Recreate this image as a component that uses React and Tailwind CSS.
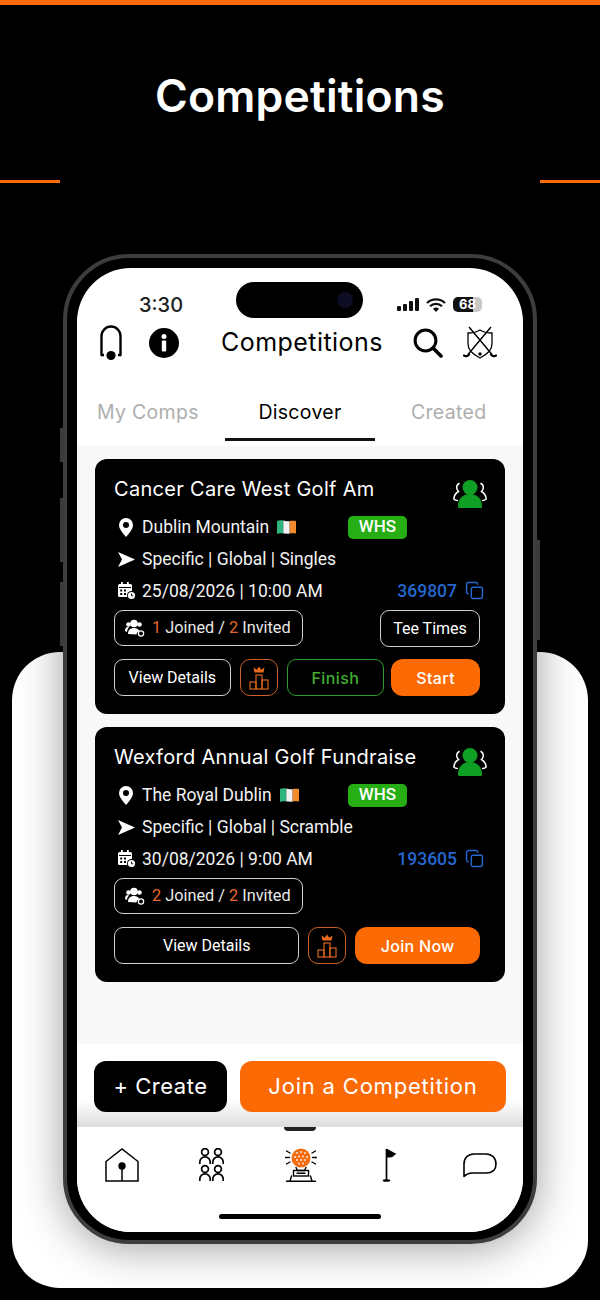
import React from "react";
import { Copy } from "lucide-react";

// icons
const GolfBag = () => (
    <svg width="24" height="36" viewBox="0 0 24 36" fill="none" stroke="#000" strokeWidth="2.4">
        <path d="M2.5 30V11a9.5 9.5 0 0 1 19 0v19" strokeLinecap="round" />
        <path d="M2 30h3M19 30h3" />
        <circle cx="12" cy="30.5" r="4.6" fill="#000" stroke="none" />
    </svg>
);

const InfoIcon = () => (
    <svg width="30" height="30" viewBox="0 0 30 30">
        <circle cx="15" cy="15" r="15" fill="#000" />
        <circle cx="15" cy="8.5" r="2.5" fill="#fff" />
        <rect x="12.8" y="12.5" width="4.4" height="11" rx="1" fill="#fff" />
    </svg>
);

const SearchIcon = () => (
    <svg width="30" height="30" viewBox="0 0 30 30" fill="none" stroke="#000" strokeLinecap="round">
        <circle cx="12.5" cy="12.5" r="10.4" strokeWidth="3" />
        <path d="M20 20l8 8" strokeWidth="3.6" />
    </svg>
);

const ShieldClubs = () => (
    <svg width="34" height="34" viewBox="0 0 34 34" fill="none" stroke="#000" strokeWidth="1.3">
        <path d="M5 7c4 0 9-1 12-3 3 2 8 3 12 3v11c0 6-6 11-12 14C11 29 5 24 5 18z" />
        <path d="M28 1L5 28.5M6 1l23 27.5" strokeWidth="1.4" />
        <path d="M1 29.5c1 1 4 1 5-1M33 29.5c-1 1-4 1-5-1" strokeWidth="2.2" strokeLinecap="round" />
        <circle cx="17" cy="28" r="1.1" fill="#000" />
    </svg>
);

const Signal = () => (
    <svg width="23" height="13" viewBox="0 0 23 13" fill="#111">
        <rect x="0" y="8" width="4" height="5" rx="1" />
        <rect x="6" y="6" width="4" height="7" rx="1" />
        <rect x="12" y="3" width="4" height="10" rx="1" />
        <rect x="18" y="0" width="4" height="13" rx="1" />
    </svg>
);

const Wifi = () => (
    <svg width="20" height="14" viewBox="0 0 20 14" fill="none" stroke="#111" strokeWidth="2.3">
        <path d="M1 5a13 13 0 0 1 18 0M4 8.3a8.6 8.6 0 0 1 12 0" />
        <path d="M10 14l-3-3.2a4.2 4.2 0 0 1 6 0z" fill="#111" stroke="none" />
    </svg>
);

const PinIcon = () => (
    <svg width="16" height="19" viewBox="0 0 16 19">
        <path fillRule="evenodd" d="M8 0a7 7 0 0 1 7 7c0 4.5-5 9.5-7 12C6 16.500 1 11.500 1 7a7 7 0 0 1 7-7zm0 4a3 3 0 1 0 0 6 3 3 0 0 0 0-6z" fill="#fff" />
    </svg>
);

const SendIcon = () => (
    <svg width="17" height="15" viewBox="0 0 17 15">
        <path d="M0 0l17 7.500L0 15l4-7.500z" fill="#fff" />
    </svg>
);

const CalendarIcon = () => (
    <svg width="18" height="18" viewBox="0 0 18 18" fill="#fff">
        <rect x="0" y="2" width="14" height="13" rx="1.500" />
        <rect x="3" y="0" width="1.800" height="4" />
        <rect x="9" y="0" width="1.800" height="4" />
        <g fill="#000">
            <rect x="1" y="5" width="12" height="1" />
            <rect x="2.200" y="7.500" width="2" height="2" />
            <rect x="6" y="7.500" width="2" height="2" />
            <rect x="2.200" y="11" width="2" height="2" />
            <rect x="6" y="11" width="2" height="2" />
        </g>
        <circle cx="13.500" cy="13.500" r="4.500" fill="#000" />
        <circle cx="13.500" cy="13.500" r="3.600" />
        <path d="M13.500 11.500v2.300h1.800" stroke="#000" strokeWidth="0.900" fill="none" />
    </svg>
);

const PeopleGear = () => (
    <svg width="20" height="18" viewBox="0 0 20 18" fill="#fff">
        <circle cx="9" cy="4.500" r="3.800" />
        <circle cx="3.500" cy="5.500" r="2.300" />
        <circle cx="14.500" cy="5.500" r="2.300" />
        <path d="M3 15c0-4 2.500-6 6-6 2.500 0 4.500 1 5.500 3-2 .5-3 2-3 3.500z" />
        <path d="M0 12c0-2.500 1-4 3-4l1 .5C2.500 10 2 11.500 2 13z" />
        <circle cx="16" cy="14.500" r="2.600" fill="none" stroke="#fff" strokeWidth="1.300" />
    </svg>
);

const IrishFlag = () => (
    <svg width="19" height="14" viewBox="0 0 19 14">
        <path d="M0 1c2-1 4-1 6.300-.5V13.500C4 13 2 13 0 14z" fill="#2fb37f" />
        <path d="M6.300.5c2 .5 4 1 6.400.5v12.500c-2.400.5-4.400 0-6.400 0z" fill="#f2f2f2" />
        <path d="M12.700 1c2.300-.5 4.300-.5 6.300 0v12.500c-2 0-4-.5-6.300 0z" fill="#f08a2c" />
    </svg>
);

const GreenPlayers = () => (
    <svg width="34" height="28" viewBox="0 0 34 28">
        <circle cx="17" cy="7.500" r="7.500" fill="#0f9f24" />
        <path d="M5 26.500c0-7.500 4.500-12.500 12-12.500s12 5 12 12.500c0 1-.5 1.500-1.500 1.500h-21c-1 0-1.500-.5-1.500-1.500z" fill="#0f9f24" />
        <path d="M6 3.500C2 6 4 10 5.500 11.500 3 13 1 15 0.800 19c1 1 2 1.500 3.500 1.500M28 3.500c4 2.500 2 6.500.5 8 2.500 1.500 4.500 3.500 4.700 7.500-1 1-2 1.500-3.500 1.500" fill="none" stroke="#fff" strokeWidth="1.500" strokeLinecap="round" />
    </svg>
);

const Podium = () => (
    <svg width="20" height="24" viewBox="0 0 20 24" fill="none" stroke="#d9651f" strokeWidth="1.200">
        <path d="M5.500 6.500L4.500 1.500 7.800 3.800 10 .5l2.200 3.300 3.300-2.300-1 5z" fill="#e9691d" stroke="none" />
        <rect x="7" y="9" width="6" height="14" />
        <rect x="1" y="16" width="6" height="7" />
        <rect x="13" y="14" width="6" height="9" />
    </svg>
);

const HomeIcon = () => (
    <svg width="34" height="34" viewBox="0 0 34 34" fill="none" stroke="#000" strokeWidth="1.500">
        <path d="M1 33V13.500L17 1l16 12.500V33z" />
        <circle cx="17" cy="18" r="3.700" fill="#000" stroke="none" />
        <path d="M17 20v13" />
    </svg>
);

const Person = ({ x, y }) => (
    <g transform={`translate(${x} ${y})`}>
        <circle cx="6" cy="4" r="3.400" />
        <path d="M.8 16v-2a5.200 5.200 0 0 1 10.400 0v2" />
    </g>
);

const GroupIcon = () => (
    <svg width="27" height="34" viewBox="0 0 27 34" fill="none" stroke="#000" strokeWidth="1.700">
        <Person x={1} y={0} />
        <Person x={14} y={0} />
        <Person x={1} y={17} />
        <Person x={14} y={17} />
    </svg>
);

const GolfTrophy = () => (
    <svg width="32" height="34" viewBox="0 0 32 34">
        <circle cx="16" cy="10" r="9.500" fill="#f26c12" />
        <g fill="#fde3cf">
            {[[12, 5], [16, 4], [20, 5], [10, 9], [14, 8.500], [18, 8.500], [22, 9], [12, 12], [16, 12], [20, 12], [14, 15.500], [18, 15.500]].map(([cx, cy]) => (
                <circle key={`${cx}-${cy}`} cx={cx} cy={cy} r="1" />
            ))}
        </g>
        <g fill="none" stroke="#000" strokeWidth="1.400" strokeLinecap="round">
            <path d="M0.500 9.500h4M27.500 9.500h4M1.500 3l3.500 2M30.500 3L27 5M1.500 16l3.500-2M30.500 16L27 14" />
            <path d="M11 19.500l1.500 3h7l1.500-3" />
            <rect x="8.500" y="22.500" width="15" height="5.500" />
            <path d="M12 25.300h8" />
            <path d="M6.500 28l-1.500 5M25.500 28l1.500 5M1.500 33.300h29" />
        </g>
    </svg>
);

const FlagIcon = () => (
    <svg width="16" height="34" viewBox="0 0 16 34">
        <path d="M4.500 1v31" stroke="#000" strokeWidth="1.700" />
        <path d="M4.500 0.500l10 5.500c-2 1-2 1-4 3-2 .5-4 .5-6 .5z" fill="#000" />
        <ellipse cx="4.500" cy="32.500" rx="3.800" ry="1.300" fill="#000" />
    </svg>
);

const ChatIcon = () => (
    <svg width="34" height="25" viewBox="0 0 34 25" fill="none" stroke="#000" strokeWidth="1.600">
        <path d="M1 23.500V11C1 5 5 1 11 1h12c6 0 10 4 10 10s-4 9-10 9H9c-3 0-6 1.500-8 3.500z" strokeLinejoin="round" />
    </svg>
);

const outlineBtn = "h-[37px] flex items-center justify-center rounded-[9px] border-[1.500px] border-[#cfcfcf] text-white text-[16px] font-['Roboto',sans-serif]";

function Card({ title, course, format, date, code, joined, finished }) {
    return (
        <div className="relative h-[255px] rounded-[12px] bg-black pl-[19px] pr-[25px] pt-[17px] text-[#f2f2f2] font-['Roboto',sans-serif]">
            <div className="h-[26px] text-[20px] leading-[26px] tracking-[0.3px] text-white font-['Inter',sans-serif]">{title}</div>
            <div className="absolute right-[18px] top-[21px]">
                <GreenPlayers />
            </div>

            <div className="mt-[9px] h-[32px] flex items-center text-[17.500px]">
                <span className="w-[28px] pl-[4px] flex">
                    <PinIcon />
                </span>
                <span className="w-[206px] flex items-center gap-[8px] whitespace-nowrap">
                    {course}
                    <IrishFlag />
                </span>
                <span className="w-[59px] h-[23px] rounded-[5px] bg-[#27ae14] flex items-center justify-center text-[17px] font-medium text-white">WHS</span>
            </div>
            <div className="h-[32px] flex items-center text-[17.500px]">
                <span className="w-[28px] pl-[4px] flex">
                    <SendIcon />
                </span>
                {format}
            </div>
            <div className="h-[32px] flex items-center text-[17.500px]">
                <span className="w-[28px] pl-[4px] flex">
                    <CalendarIcon />
                </span>
                {date}
                <span className="ml-auto font-medium text-[#2467cf]">{code}</span>
                <Copy className="ml-[8px] mr-[-4px] mt-[-1px] text-[#2467cf]" size={19} strokeWidth={1.800} />
            </div>

            <div className="mt-[3px] flex justify-between items-start">
                <div className="h-[36px] w-[189px] pl-[10px] flex items-center rounded-[9px] border-[1.500px] border-[#cfcfcf] text-[16.300px] text-[#e8e8e8]">
                    <PeopleGear />
                    <span className="ml-[7px]">
                        <span className="text-[#e9692c]">{joined}</span> Joined / <span className="text-[#e9692c]">2</span> Invited
                    </span>
                </div>
                {finished && <div className={`${outlineBtn} w-[100px]`}>Tee Times</div>}
            </div>

            {finished ? (
                <div className="mt-[12px] flex">
                    <div className={`${outlineBtn} w-[117px]`}>View Details</div>
                    <div className="ml-[9px] w-[38px] h-[37px] flex items-center justify-center rounded-[10px] border-[1.500px] border-[#c9632a]">
                        <Podium />
                    </div>
                    <div className="ml-[9px] w-[98px] h-[37px] flex items-center justify-center rounded-[9px] border-[1.500px] border-[#2f9a2f] text-[#3fae30] text-[16px] font-medium tracking-[0.4px] font-['Inter',sans-serif]">
                        Finish
                    </div>
                    <div className="ml-[7px] w-[89px] h-[37px] flex items-center justify-center rounded-[12px] bg-[#fb6a05] text-[16px] text-white font-medium tracking-[0.4px] font-['Inter',sans-serif]">
                        Start
                    </div>
                </div>
            ) : (
                <div className="mt-[13px] flex">
                    <div className={`${outlineBtn} w-[186px]`}>View Details</div>
                    <div className="ml-[9px] w-[38px] h-[37px] flex items-center justify-center rounded-[10px] border-[1.500px] border-[#c9632a]">
                        <Podium />
                    </div>
                    <div className="ml-[9px] w-[125px] h-[37px] flex items-center justify-center rounded-[12px] bg-[#fb6a05] text-[16px] text-white font-medium tracking-[0.3px] font-['Inter',sans-serif]">
                        Join Now
                    </div>
                </div>
            )}
        </div>
    );
}

function PhoneScreen() {
    return (
        <div className="h-[964px] rounded-[54px] bg-white overflow-hidden flex flex-col font-['Inter',sans-serif]">
            {/* status bar */}
            <div className="h-[50px] pt-[14px] flex items-start relative shrink-0">
                <div className="ml-[62px] mt-[11px] text-[20px] leading-[24px] font-medium text-[#222]">3:30</div>
                <div className="absolute left-[159px] top-[14px] w-[127px] h-[36px] rounded-full bg-black flex items-center justify-end pr-[10px]">
                    <div className="w-[16px] h-[16px] rounded-full bg-[#0c0c24]" />
                </div>
                <div className="absolute left-[320px] top-[29px] flex items-center">
                    <Signal />
                    <span className="ml-[6px]">
                        <Wifi />
                    </span>
                    <div className="ml-[7px] w-[29px] h-[15px] rounded-[5px] bg-[linear-gradient(90deg,#111_0,#111_68%,#c8c8c8_68%)] flex items-center justify-center text-[13px] leading-none font-bold text-white">68</div>
                </div>
            </div>

            {/* header */}
            <div className="relative mt-[7px] h-[36px] shrink-0 flex items-center">
                <div className="ml-[22px]">
                    <GolfBag />
                </div>
                <div className="ml-[26px]">
                    <InfoIcon />
                </div>
                <div className="ml-[42px] w-[162px] whitespace-nowrap text-[25px] tracking-[0.45px] text-black">Competitions</div>
                <div className="ml-[30px]">
                    <SearchIcon />
                </div>
                <div className="ml-[20px]">
                    <ShieldClubs />
                </div>
            </div>

            {/* tabs */}
            <div className="mt-[37px] h-[43px] shrink-0 flex text-[19.500px] tracking-[0.3px]">
                <div className="w-[148px] pl-[20px] text-[#aeaeae]">My Comps</div>
                <div className="w-[150px] h-[43px] text-center text-black border-b-[3px] border-[#111]">Discover</div>
                <div className="flex-1 pl-[36px] text-[#aeaeae]">Created</div>
            </div>

            {/* list */}
            <div className="mt-[5px] h-[598px] shrink-0 bg-[#f8f8f8] px-[18px] pt-[13px] flex flex-col gap-[13px]">
                <Card title="Cancer Care West Golf Am" course="Dublin Mountain" format="Specific | Global | Singles" date="25/08/2026 | 10:00 AM" code="369807" joined="1" finished />
                <Card title="Wexford Annual Golf Fundraise" course="The Royal Dublin" format="Specific | Global | Scramble" date="30/08/2026 | 9:00 AM" code="193605" joined="2" />
            </div>

            {/* actions */}
            <div className="h-[83px] shrink-0 bg-[linear-gradient(180deg,#fff_0,#fff_68%,#dcdcdc_100%)] pl-[17px] pr-[17px] pt-[17px] flex gap-[13px]">
                <div className="w-[133px] h-[51px] rounded-[12px] bg-black text-white flex items-center justify-center text-[22px] tracking-[0.5px]">+ Create</div>
                <div className="flex-1 h-[51px] rounded-[12px] bg-[#fb6a05] text-white flex items-center justify-center text-[22px] tracking-[0.8px]">Join a Competition</div>
            </div>

            {/* tab bar */}
            <div className="relative flex-1 bg-white">
                <div className="absolute left-[207px] top-0 w-[32px] h-[4px] rounded-b-[4px] bg-[#222]" />
                <div className="flex items-start pt-[21px]">
                    <div className="ml-[28px]">
                        <HomeIcon />
                    </div>
                    <div className="ml-[59px]">
                        <GroupIcon />
                    </div>
                    <div className="ml-[60px]">
                        <GolfTrophy />
                    </div>
                    <div className="ml-[65px]">
                        <FlagIcon />
                    </div>
                    <div className="ml-[65px] mt-[5px]">
                        <ChatIcon />
                    </div>
                </div>
                <div className="absolute left-[142px] top-[87px] w-[162px] h-[5px] rounded-full bg-black" />
            </div>
        </div>
    );
}

export default function App() {
    return (
        <div className="relative w-[600px] h-[1300px] bg-black overflow-hidden">
            <div className="h-[5px] bg-[#fb6a05]" />
            <h1 className="mt-[61px] text-center text-white text-[44.500px] leading-[60px] font-semibold tracking-[0.2px] font-['Inter',sans-serif]">Competitions</h1>
            <div className="mt-[54px] flex justify-between">
                <div className="w-[60px] h-[3px] bg-[#fb6a05]" />
                <div className="w-[60px] h-[3px] bg-[#fb6a05]" />
            </div>

            {/* white panel behind the phone */}
            <div className="absolute left-[12px] top-[652px] w-[576px] h-[636px] rounded-[48px] bg-white" />

            {/* phone */}
            <div className="absolute left-[63px] top-[254px] w-[474px] h-[990px]">
                <div className="absolute left-[-3px] top-[174px] w-[3px] h-[34px] bg-[#3a3a3a]" />
                <div className="absolute left-[-3px] top-[244px] w-[3px] h-[64px] bg-[#3a3a3a]" />
                <div className="absolute left-[-3px] top-[328px] w-[3px] h-[64px] bg-[#3a3a3a]" />
                <div className="absolute right-[-3px] top-[286px] w-[3px] h-[100px] bg-[#3a3a3a]" />
                <div className="h-full rounded-[66px] bg-black border-[4px] border-[#3d3d3d] p-[10px] shadow-[0_4px_44px_rgba(0,0,0,0.38)]">
                    <PhoneScreen />
                </div>
            </div>
        </div>
    );
}
